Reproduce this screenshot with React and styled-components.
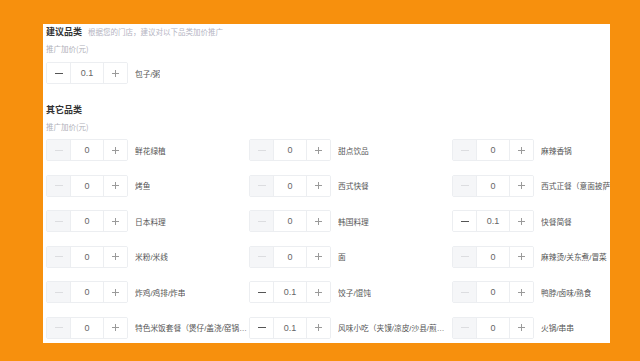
import React from "react";
import styled, { createGlobalStyle } from "styled-components";

const Global = createGlobalStyle`
  html, body { margin: 0; padding: 0; }
  body {
    background: #f7900d;
    width: 640px;
    height: 361px;
    overflow: hidden;
    font-family: "Noto Sans CJK SC", "Liberation Sans", sans-serif;
  }
`;

const Page = styled.div`
  width: 640px;
  height: 361px;
  padding: 24px 0 0 43px;
  box-sizing: border-box;
`;

const Panel = styled.div`
  width: 567px;
  height: 319px;
  background: #ffffff;
  overflow: hidden;
  padding-left: 3px;
  box-sizing: border-box;
  display: flex;
  flex-direction: column;
`;

const TitleRow = styled.div`
  display: flex;
  align-items: center;
  gap: 6px;
  height: 16px;
  margin-top: ${(p) => p.$mt || 0}px;
`;

const Title = styled.span`
  font-size: 9px;
  font-weight: 700;
  color: #333333;
  line-height: 16px;
`;

const Hint = styled.span`
  font-size: 7.5px;
  color: #b4b4c2;
  line-height: 16px;
`;

const SubLabel = styled.div`
  font-size: 7.5px;
  color: #b0b0b8;
  line-height: 12px;
  height: 12px;
  margin-top: 3px;
`;

const Grid = styled.div`
  display: grid;
  grid-template-columns: repeat(3, 203px);
  row-gap: 13.6px;
  margin-top: ${(p) => p.$mt || 0}px;
`;

const Item = styled.div`
  display: flex;
  align-items: center;
  gap: 7px;
  height: 22px;
  min-width: 0;
`;

const Stepper = styled.div`
  flex: none;
  display: flex;
  width: 82px;
  height: 22px;
  border: 1px solid #eceef1;
  border-radius: 2px;
  box-sizing: border-box;
  overflow: hidden;
`;

const StepBtn = styled.div`
  width: 23px;
  flex: none;
  display: flex;
  align-items: center;
  justify-content: center;
  background: ${(p) => (p.$disabled ? "#f5f6f8" : "#ffffff")};
  border-left: ${(p) => (p.$side === "right" ? "1px solid #eceef1" : "none")};
  border-right: ${(p) => (p.$side === "left" ? "1px solid #eceef1" : "none")};
`;

const MinusBar = styled.span`
  width: 8px;
  height: 1px;
  background: ${(p) => (p.$disabled ? "#dcdde0" : "#555555")};
`;

const PlusMark = styled.span`
  position: relative;
  width: 7px;
  height: 7px;
  &::before, &::after {
    content: "";
    position: absolute;
    background: #9a9a9a;
  }
  &::before { left: 0; right: 0; top: 3px; height: 1px; }
  &::after { top: 0; bottom: 0; left: 3px; width: 1px; }
`;

const Value = styled.div`
  flex: 1;
  display: flex;
  align-items: center;
  justify-content: center;
  font-size: 9px;
  color: #666666;
  font-family: "Liberation Sans", "Noto Sans CJK SC", sans-serif;
`;

const Label = styled.span`
  font-size: 7.7px;
  color: #555555;
  font-family: "Liberation Sans", "Noto Sans CJK SC", sans-serif;
  white-space: nowrap;
  overflow: ${(p) => (p.$clip ? "visible" : "hidden")};
  text-overflow: ellipsis;
  max-width: ${(p) => (p.$clip ? "none" : "112px")};
`;

function Counter({ value }) {
  const disabled = value === "0";
  return (
    <Stepper>
      <StepBtn $side="left" $disabled={disabled}>
        <MinusBar $disabled={disabled} />
      </StepBtn>
      <Value>{value}</Value>
      <StepBtn $side="right">
        <PlusMark />
      </StepBtn>
    </Stepper>
  );
}

const others = [
  ["鲜花绿植", "0"], ["甜点饮品", "0"], ["麻辣香锅", "0"],
  ["烤鱼", "0"], ["西式快餐", "0"], ["西式正餐（意面披萨）", "0", true],
  ["日本料理", "0"], ["韩国料理", "0"], ["快餐简餐", "0.1"],
  ["米粉/米线", "0"], ["面", "0"], ["麻辣烫/关东煮/冒菜", "0", true],
  ["炸鸡/鸡排/炸串", "0"], ["饺子/馄饨", "0.1"], ["鸭脖/卤味/熟食", "0"],
  ["特色米饭套餐（煲仔/盖浇/窑锅/石锅）", "0"], ["风味小吃（夹馍/凉皮/沙县/煎饼）", "0.1"], ["火锅/串串", "0"],
];

export default function App() {
  return (
    <>
      <Global />
      <Page>
        <Panel>
          <TitleRow>
            <Title>建议品类</Title>
            <Hint>根据您的门店，建议对以下品类加价推广</Hint>
          </TitleRow>
          <SubLabel>推广加价(元)</SubLabel>
          <Grid $mt={7}>
            <Item>
              <Counter value="0.1" />
              <Label>包子/粥</Label>
            </Item>
          </Grid>
          <TitleRow $mt={18}>
            <Title>其它品类</Title>
          </TitleRow>
          <SubLabel>推广加价(元)</SubLabel>
          <Grid $mt={6}>
            {others.map(([name, v, clip]) => (
              <Item key={name}>
                <Counter value={v} />
                <Label $clip={clip}>{name}</Label>
              </Item>
            ))}
          </Grid>
        </Panel>
      </Page>
    </>
  );
}
